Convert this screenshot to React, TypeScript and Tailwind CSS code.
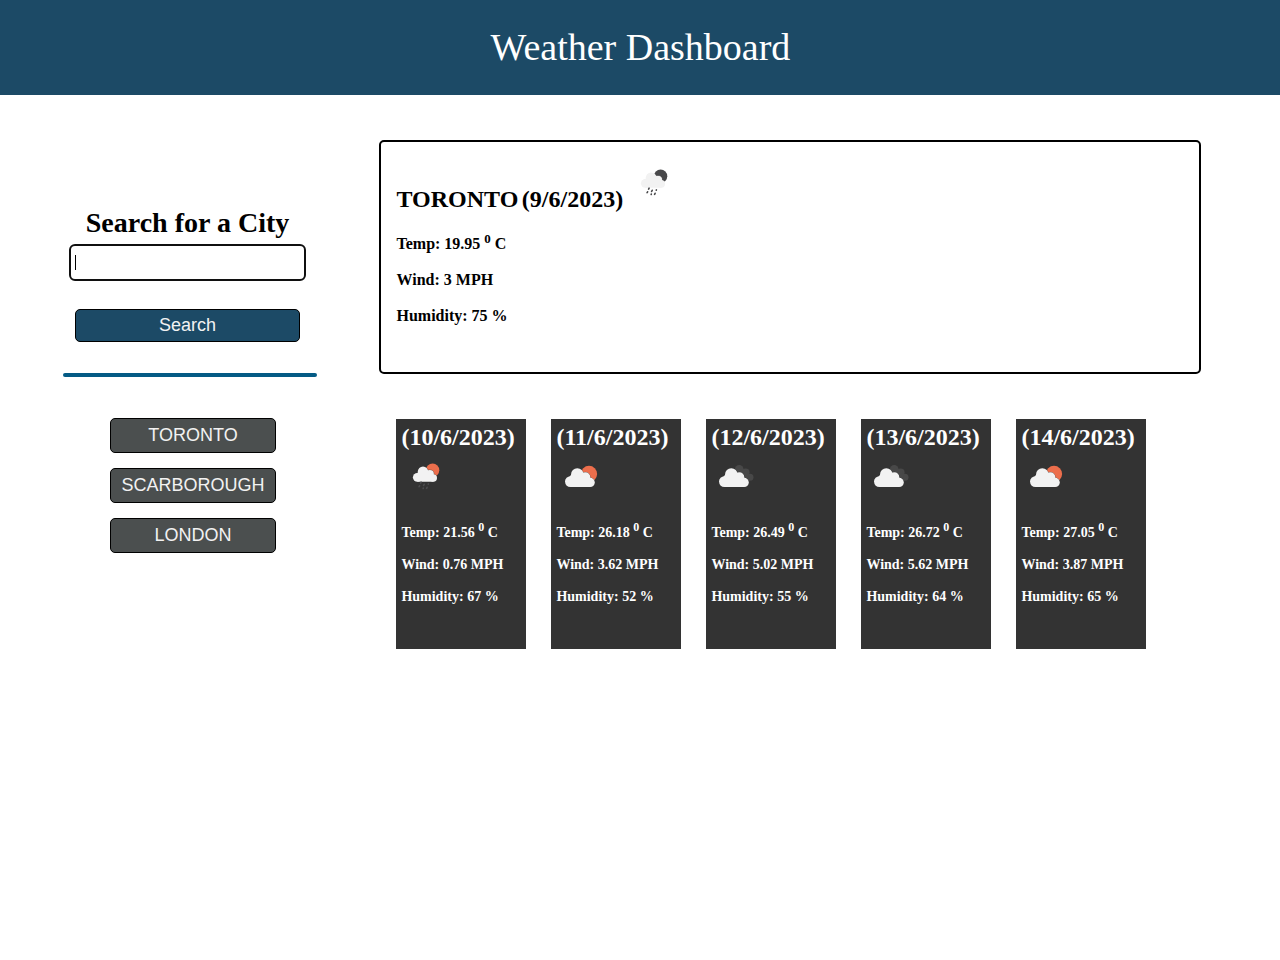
type IconKind = 'night-rain' | 'day-rain' | 'day-cloud' | 'clouds';

function LargeCloud() {
  return (
    <>
      <circle cx="14.4" cy="29.6" r="5.4" />
      <circle cx="21.3" cy="22.5" r="6.3" />
      <circle cx="29.4" cy="25.2" r="4.9" />
      <circle cx="34.2" cy="30.4" r="4.6" />
      <path d="M13.5 24.6L16 22h14l4 5v8H14.4z" />
    </>
  );
}

function SmallCloud() {
  return (
    <>
      <circle cx="16.3" cy="25.3" r="4.4" />
      <circle cx="22" cy="19.6" r="5.2" />
      <circle cx="28.8" cy="22" r="4.1" />
      <circle cx="32.3" cy="26" r="3.7" />
      <path d="M15.8 21.2L18 19.5h10.5l4 4v6.2H16.3z" />
    </>
  );
}

function WeatherIcon({ kind }: { kind: IconKind }) {
  const rainy = kind === 'night-rain' || kind === 'day-rain';
  const gap = kind === 'night-rain' ? '#ffffff' : '#333333';
  const Cloud = rainy ? SmallCloud : LargeCloud;
  return (
    <svg viewBox="0 0 50 50" className="block size-[50px] shrink-0" aria-hidden="true">
      {rainy && <circle cx="31.6" cy="18.3" r="6.7" fill={kind === 'night-rain' ? '#48484a' : '#ec6e4c'} />}
      {kind === 'day-cloud' && <circle cx="33" cy="21.9" r="8.1" fill="#ec6e4c" />}
      {kind === 'clouds' && (
        <g fill="#484848">
          <circle cx="28.2" cy="17.2" r="4.3" />
          <circle cx="34.6" cy="20.6" r="4" />
          <circle cx="39" cy="25.2" r="3.5" />
          <path d="M28 18l8 0 3 10.7h-6z" />
        </g>
      )}
      <g transform={kind === 'clouds' ? 'translate(-1 0)' : undefined}>
        <g fill={gap} stroke={gap} strokeWidth={kind === 'clouds' ? 0.8 : 0.3}>
          <Cloud />
        </g>
        <g fill="#f2f2f2">
          <Cloud />
        </g>
      </g>
      {rainy && (
        <path
          d="M20.1 30.1l-.5 1M23.2 32.3l-.6 1.2M27.4 31.9l-.2.3M18.6 33.8l-.5.9M22.3 36.1l-.1.3M26.1 35.3l-.5 1"
          fill="none"
          stroke={kind === 'night-rain' ? '#48484a' : '#4c4c4e'}
          strokeWidth={1.6}
          strokeLinecap="round"
        />
      )}
    </svg>
  );
}

const cities = ['TORONTO', 'SCARBOROUGH', 'LONDON'];

const forecast: { date: string; icon: IconKind; temp: string; wind: string; humidity: number }[] = [
  { date: '10/6/2023', icon: 'day-rain', temp: '21.56', wind: '0.76', humidity: 67 },
  { date: '11/6/2023', icon: 'day-cloud', temp: '26.18', wind: '3.62', humidity: 52 },
  { date: '12/6/2023', icon: 'clouds', temp: '26.49', wind: '5.02', humidity: 55 },
  { date: '13/6/2023', icon: 'clouds', temp: '26.72', wind: '5.62', humidity: 64 },
  { date: '14/6/2023', icon: 'day-cloud', temp: '27.05', wind: '3.87', humidity: 65 },
];

function Degree({ className }: { className: string }) {
  return <span className={`inline-block leading-none ${className}`}>0</span>;
}

export default function App() {
  return (
    <div className="min-h-[960px] bg-white font-['Liberation_Serif',serif] text-black">
      <header className="flex h-[95px] items-center justify-center bg-[#1c4a66] pb-0.5 pl-px text-[38px] leading-none text-white">
        <h1>Weather Dashboard</h1>
      </header>

      <div className="flex">
        <aside className="flex w-[317px] flex-col pl-[63px]">
          <div className="flex flex-col items-center pt-[112px] pr-[5px]">
            <h2 className="text-[28px] leading-8 font-bold">Search for a City</h2>
            <div className="mt-[5px] flex h-[37px] w-[237px] items-center rounded-md border-2 border-[#101010] pb-px pl-1">
              <span className="h-[15px] w-px bg-black" />
            </div>
            <button className="mt-7 h-[33px] w-[225px] rounded-[5px] border border-black bg-[#1c4a66] pb-0.5 font-['Liberation_Sans',sans-serif] text-lg leading-none text-[#f2f2f2]">
              Search
            </button>
          </div>
          <hr className="mt-[31px] h-1 rounded-sm border-0 bg-[#045b85]" />
          <div className="mt-[41px] flex flex-col items-center gap-[15px] pl-[6px]">
            {cities.map((city) => (
              <button
                key={city}
                className="h-[35px] w-[166px] rounded-[5px] border border-black bg-[#4b4f4f] pb-0.5 font-['Liberation_Sans',sans-serif] text-lg leading-none text-[#f2f2f2]"
              >
                {city}
              </button>
            ))}
          </div>
        </aside>

        <main className="ml-[62px] pt-[45px]">
          <section className="h-[234px] w-[822px] rounded-[5px] border-2 border-black pt-[15px] pl-[15.5px] font-bold">
            <div className="flex h-[58px]">
              <h2 className="w-[226px] pt-[28px] text-2xl leading-7 whitespace-nowrap [word-spacing:-2.5px]">
                TORONTO (9/6/2023)
              </h2>
              <div className="pt-px pl-[6.5px]">
                <WeatherIcon kind="night-rain" />
              </div>
            </div>
            <div className="mt-5 flex flex-col gap-[18px] text-base leading-[18px]">
              <p>
                Temp: 19.95 <Degree className="-translate-y-[6px] text-[13px]" /> C
              </p>
              <p>Wind: 3 MPH</p>
              <p>Humidity: 75 %</p>
            </div>
          </section>

          <section className="mt-[45px] ml-[17px] flex gap-[25px]">
            {forecast.map((day) => (
              <article key={day.date} className="h-[230px] w-[130px] bg-[#333333] pt-1 pl-[5px] font-bold text-white">
                <h3 className="pl-[0.4px] text-2xl leading-7 whitespace-nowrap">({day.date})</h3>
                <div className="pt-px">
                  <WeatherIcon kind={day.icon} />
                </div>
                <div className="mt-[23px] flex flex-col gap-4 pl-[0.4px] text-sm leading-4">
                  <p>
                    Temp: {day.temp} <Degree className="-translate-y-[6px] text-[12px]" /> C
                  </p>
                  <p>Wind: {day.wind} MPH</p>
                  <p>Humidity: {day.humidity} %</p>
                </div>
              </article>
            ))}
          </section>
        </main>
      </div>
    </div>
  );
}
